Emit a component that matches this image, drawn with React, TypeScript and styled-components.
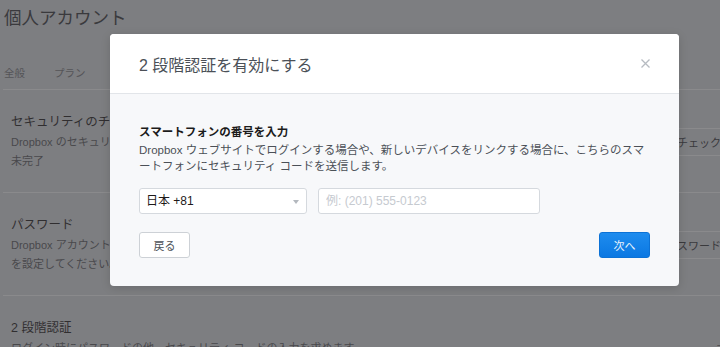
import React from "react"
import styled, { createGlobalStyle } from "styled-components"

const GlobalStyle = createGlobalStyle`
  html, body {
    margin: 0;
    padding: 0;
    overflow: hidden;
    background: #dfe0e3;
  }
  body {
    font-family: "Liberation Sans", "Noto Sans CJK JP", sans-serif;
  }
`

const Page = styled.div`
  position: relative;
  width: 789px;
  box-sizing: border-box;
  padding: 6px 22px 0 3px;
  background: #dfe0e3;
  color: #1e1919;
`

const PageTitle = styled.h1`
  margin: 0 0 0 1px;
  font-size: 17.5px;
  line-height: 24px;
  font-weight: 400;
  color: #37373b;
`

const Tabs = styled.nav`
  display: flex;
  gap: 29px;
  padding: 36px 0 9px 1px;
  border-bottom: 1px solid #ffffff;
`

const Tab = styled.span`
  font-size: 10.5px;
  line-height: 14px;
  color: #7a7a7e;
`

const Row = styled.section`
  display: flex;
  align-items: center;
  justify-content: space-between;
  padding: 23px 0 21px 8px;
  border-bottom: 1px solid #ffffff;
`

const RowText = styled.div`
  display: flex;
  flex-direction: column;
  gap: 2px;
`

const RowTitle = styled.div`
  font-size: 12.5px;
  line-height: 18px;
  color: #1e1919;
`

const RowDesc = styled.div`
  font-size: 11px;
  line-height: 19px;
  color: #5c5c60;
`

const PageButton = styled.button`
  height: 28px;
  padding: 0 12px;
  border: 1px solid #ffffff;
  border-radius: 3px;
  background: #dfe0e3;
  font-family: inherit;
  font-size: 11px;
  color: #37373b;
`

const Status = styled.span<{ $offset: number }>`
  margin-right: ${(p) => p.$offset}px;
  font-size: 11px;
  line-height: 19px;
  color: #5c5c60;
`

const Overlay = styled.div`
  position: absolute;
  inset: 0;
  display: flex;
  justify-content: center;
  align-items: flex-start;
  padding-top: 34px;
  background: rgba(60, 60, 64, 0.6);
`

const Modal = styled.div`
  width: 569px;
  border-radius: 4px;
  overflow: hidden;
  background: #f7f8fa;
  box-shadow: 0 2px 10px rgba(0, 0, 0, 0.15);
`

const ModalHeader = styled.header`
  display: flex;
  align-items: center;
  justify-content: space-between;
  height: 59px;
  padding: 0 29px;
  background: #ffffff;
  border-bottom: 1px solid #e2e5e9;
`

const ModalTitle = styled.h2`
  margin: 0;
  font-size: 16px;
  font-weight: 400;
  color: #4b5057;
`

const CloseButton = styled.button`
  display: flex;
  padding: 0;
  border: none;
  background: none;
  cursor: pointer;
`

const ModalBody = styled.div`
  padding: 30px 29px 28px;
`

const Heading = styled.h3`
  margin: 0;
  font-size: 11.5px;
  line-height: 16px;
  font-weight: 700;
  color: #1b1b1b;
`

const Description = styled.p`
  margin: 2px 0 0;
  font-size: 11.5px;
  line-height: 16px;
  color: #4b5057;
`

const PhoneRow = styled.div`
  display: flex;
  gap: 11px;
  margin-top: 14px;
`

const SelectBox = styled.div`
  position: relative;
  width: 168px;

  &::after {
    content: "";
    position: absolute;
    right: 8px;
    top: 12px;
    border-left: 3.5px solid transparent;
    border-right: 3.5px solid transparent;
    border-top: 4px solid #b3b8be;
    pointer-events: none;
  }
`

const Select = styled.select`
  width: 100%;
  height: 26px;
  box-sizing: border-box;
  padding: 0 6px;
  appearance: none;
  border: 1px solid #d5d9de;
  border-radius: 3px;
  background: #ffffff;
  font-family: inherit;
  font-size: 12px;
  color: #1e1919;
`

const PhoneInput = styled.input`
  width: 222px;
  height: 26px;
  box-sizing: border-box;
  padding: 0 7px;
  border: 1px solid #d5d9de;
  border-radius: 3px;
  background: #ffffff;
  font-family: inherit;
  font-size: 12px;
  color: #1e1919;

  &::placeholder {
    color: #c6cad0;
  }
`

const Actions = styled.div`
  display: flex;
  justify-content: space-between;
  margin-top: 18px;
`

const ModalButton = styled.button<{ $primary?: boolean }>`
  width: 51px;
  height: 26px;
  padding: 0;
  border-radius: 3px;
  font-family: inherit;
  font-size: 11px;
  border: 1px solid ${(p) => (p.$primary ? "#0c72d6" : "#cdd1d6")};
  background: ${(p) =>
    p.$primary ? "linear-gradient(#1e8cee, #0b78e2)" : "#ffffff"};
  color: ${(p) => (p.$primary ? "#eaf4fd" : "#4b5057")};
`

export default function App() {
  return (
    <>
      <GlobalStyle />
      <Page>
        <PageTitle>個人アカウント</PageTitle>
        <Tabs>
          <Tab>全般</Tab>
          <Tab>プラン</Tab>
        </Tabs>
        <Row>
          <RowText>
            <RowTitle>セキュリティのチェック</RowTitle>
            <RowDesc>
              Dropbox のセキュリティ設定を確認してください。
              <br />
              未完了
            </RowDesc>
          </RowText>
          <PageButton>セキュリティ チェックを開始</PageButton>
        </Row>
        <Row>
          <RowText>
            <RowTitle>パスワード</RowTitle>
            <RowDesc>
              Dropbox アカウントを保護するため、強力なパスワード
              <br />
              を設定してください。
            </RowDesc>
          </RowText>
          <PageButton>パスワードを変更</PageButton>
        </Row>
        <Row>
          <RowText>
            <RowTitle>2 段階認証</RowTitle>
            <RowDesc>
              ログイン時にパスワードの他、セキュリティ コードの入力を求めます。
              <br />
              アカウントのセキュリティを強化します。
            </RowDesc>
          </RowText>
          <Status $offset={29}>オフ</Status>
        </Row>

        <Overlay>
          <Modal>
            <ModalHeader>
              <ModalTitle>2 段階認証を有効にする</ModalTitle>
              <CloseButton aria-label="閉じる">
                <svg width="9" height="9" viewBox="0 0 9 9">
                  <path
                    d="M0.5 0.5L8.5 8.5M8.5 0.5L0.5 8.5"
                    stroke="#b6bbc1"
                    strokeWidth="1.3"
                    fill="none"
                  />
                </svg>
              </CloseButton>
            </ModalHeader>
            <ModalBody>
              <Heading>スマートフォンの番号を入力</Heading>
              <Description>
                Dropbox ウェブサイトでログインする場合や、新しいデバイスをリンクする場合に、こちらのスマ
                <br />
                ートフォンにセキュリティ コードを送信します。
              </Description>
              <PhoneRow>
                <SelectBox>
                  <Select defaultValue="jp">
                    <option value="jp">日本 +81</option>
                  </Select>
                </SelectBox>
                <PhoneInput placeholder="例: (201) 555-0123" />
              </PhoneRow>
              <Actions>
                <ModalButton>戻る</ModalButton>
                <ModalButton $primary>次へ</ModalButton>
              </Actions>
            </ModalBody>
          </Modal>
        </Overlay>
      </Page>
    </>
  )
}
